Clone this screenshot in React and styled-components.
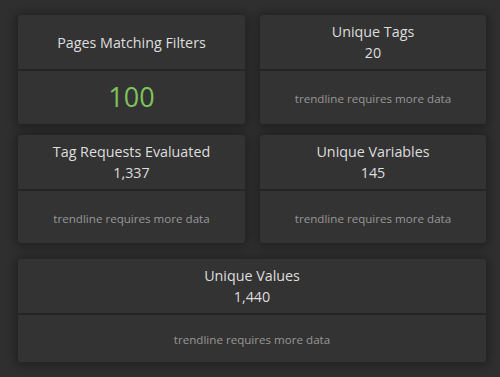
import styled, { createGlobalStyle } from "styled-components"

const GlobalStyle = createGlobalStyle`
  html, body {
    margin: 0;
    padding: 0;
    background-color: #2f2f2f;
    font-family: "Open Sans", "Liberation Sans", sans-serif;
  }
`

const Dashboard = styled.main`
  width: 500px;
  height: 377px;
  box-sizing: border-box;
  padding: 15px 14px 0 18px;
  display: grid;
  grid-template-columns: 227px 226px;
  grid-template-rows: 109px 108px 108px;
  column-gap: 15px;
  row-gap: 11px;
  grid-template-areas:
    "a b"
    "c d"
    "e e";
`

const Card = styled.section`
  grid-area: ${(props) => props.area};
  margin-top: ${(props) => (props.area === "e" ? "5px" : "0")};
  background-color: #333333;
  border-radius: 3px;
  box-shadow: 0 1px 10px 3px rgba(0, 0, 0, 0.3);
  display: flex;
  flex-direction: column;
  overflow: hidden;
`

const CardHeader = styled.header`
  height: 54px;
  flex-shrink: 0;
  display: flex;
  flex-direction: column;
  align-items: center;
  justify-content: center;
  border-bottom: 2px solid #252525;
  color: #dedede;
  font-size: 14.3px;
  line-height: 21px;
`

const Title = styled.h3`
  margin: 0;
  font-size: 14.3px;
  font-weight: 400;
`

const Count = styled.div`
  font-size: 14.3px;
`

const CardBody = styled.div`
  flex: 1;
  display: flex;
  align-items: center;
  justify-content: center;
`

const BigNumber = styled.span`
  color: #7dc35b;
  font-size: 27px;
  line-height: 1;
  margin-top: -2px;
`

const Note = styled.span`
  color: #979797;
  font-size: 11.6px;
  margin-top: 2px;
`

const stats = [
  { area: "c", title: "Tag Requests Evaluated", value: "1,337" },
  { area: "d", title: "Unique Variables", value: "145" },
  { area: "e", title: "Unique Values", value: "1,440" },
]

function StatCard({ area, title, value }) {
  return (
    <Card area={area}>
      <CardHeader>
        <Title>{title}</Title>
        <Count>{value}</Count>
      </CardHeader>
      <CardBody>
        <Note>trendline requires more data</Note>
      </CardBody>
    </Card>
  )
}

export default function App() {
  return (
    <>
      <GlobalStyle />
      <Dashboard>
        <Card area="a">
          <CardHeader>
            <Title>Pages Matching Filters</Title>
          </CardHeader>
          <CardBody>
            <BigNumber>100</BigNumber>
          </CardBody>
        </Card>
        <StatCard area="b" title="Unique Tags" value="20" />
        {stats.map((s) => (
          <StatCard key={s.area} {...s} />
        ))}
      </Dashboard>
    </>
  )
}
